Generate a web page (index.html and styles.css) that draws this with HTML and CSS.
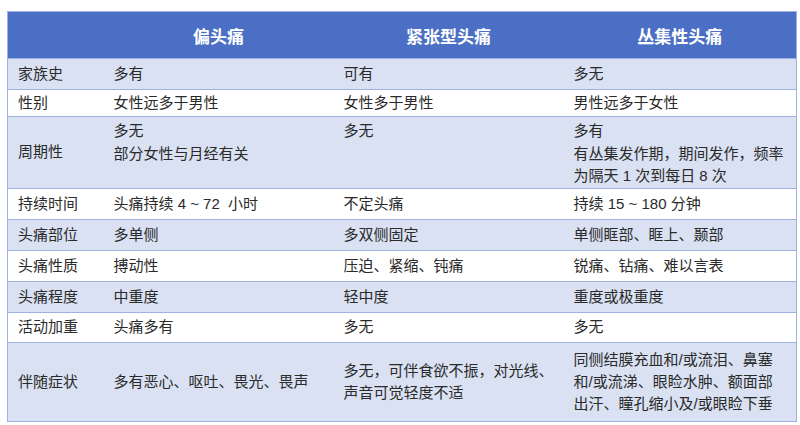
FILE: index.html
```html
<!DOCTYPE html>
<html lang="zh">
<head>
<meta charset="utf-8">
<link rel="stylesheet" href="styles.css">
</head>
<body>
<table class="cmp">
  <colgroup>
    <col class="c1"><col class="c2"><col class="c3"><col class="c4">
  </colgroup>
  <thead>
    <tr class="hd"><th></th><th>偏头痛</th><th>紧张型头痛</th><th>丛集性头痛</th></tr>
  </thead>
  <tbody>
    <tr class="alt r31"><td>家族史</td><td>多有</td><td>可有</td><td>多无</td></tr>
    <tr class="r27"><td>性别</td><td>女性远多于男性</td><td>女性多于男性</td><td>男性远多于女性</td></tr>
    <tr class="alt r71 topv"><td class="mid">周期性</td><td>多无<br>部分女性与月经有关</td><td>多无</td><td>多有<br>有丛集发作期，期间发作，频率<br>为隔天 1 次到每日 8 次</td></tr>
    <tr class="r31"><td>持续时间</td><td>头痛持续 4 ~ 72&nbsp; 小时</td><td>不定头痛</td><td>持续 15 ~ 180 分钟</td></tr>
    <tr class="alt r31"><td>头痛部位</td><td>多单侧</td><td>多双侧固定</td><td>单侧眶部、眶上、颞部</td></tr>
    <tr class="r31"><td>头痛性质</td><td>搏动性</td><td>压迫、紧缩、钝痛</td><td>锐痛、钻痛、难以言表</td></tr>
    <tr class="alt r31"><td>头痛程度</td><td>中重度</td><td>轻中度</td><td>重度或极重度</td></tr>
    <tr class="r30"><td>活动加重</td><td>头痛多有</td><td>多无</td><td>多无</td></tr>
    <tr class="alt r79"><td>伴随症状</td><td>多有恶心、呕吐、畏光、畏声</td><td>多无，可伴食欲不振，对光线、<br>声音可觉轻度不适</td><td>同侧结膜充血和/或流泪、鼻塞<br>和/或流涕、眼睑水肿、额面部<br>出汗、瞳孔缩小及/或眼睑下垂</td></tr>
  </tbody>
</table>
</body>
</html>
```

FILE: styles.css
```css
html, body {
  margin: 0;
  padding: 0;
  background: #ffffff;
}
body {
  padding: 11px 0 0 7px;
  font-family: "Liberation Sans", "Noto Sans CJK SC", sans-serif;
  color: #2a2a2a;
  font-size: 15px;
}
.cmp {
  border-collapse: collapse;
  table-layout: fixed;
  width: 789px;
  border: 1px solid #9db2e0;
}
.c1 { width: 96px; }
.c2 { width: 230px; }
.c3 { width: 230px; }
.c4 { width: 233px; }
.hd {
  height: 47px;
  background: #4a6fc4;
}
.hd th {
  color: #ffffff;
  font-size: 17px;
  font-weight: bold;
  text-align: center;
  vertical-align: middle;
  padding: 0;
  border-bottom: 1px solid #9db2e0;
}
td {
  padding: 0 0 0 10px;
  line-height: 22px;
  vertical-align: middle;
  border-bottom: 1px solid #9db2e0;
  white-space: nowrap;
}
.alt { background: #d9e1f2; }
.r27 { height: 27px; }
.r30 { height: 30px; }
.r31 { height: 31px; }
.r71 { height: 71px; }
.r79 { height: 79px; }
.topv td {
  vertical-align: top;
  padding-top: 3px;
  line-height: 22.5px;
}
.topv td.mid {
  vertical-align: middle;
  padding-top: 0;
}
```
